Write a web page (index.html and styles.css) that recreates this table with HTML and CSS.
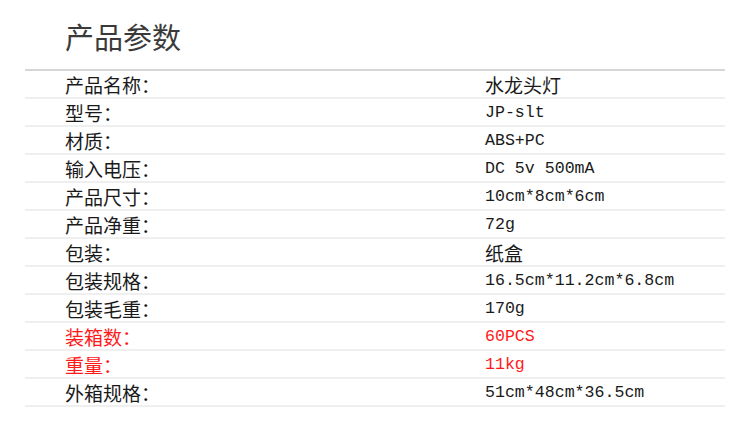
FILE: index.html
```html
<!DOCTYPE html>
<html lang="zh">
<head>
<meta charset="utf-8">
<link rel="stylesheet" href="styles.css">
</head>
<body>
<div class="page">
  <div class="title">产品参数</div>
  <div class="table">
    <div class="row"><span class="label">产品名称：</span><span class="value">水龙头灯</span></div>
    <div class="row"><span class="label">型号：</span><span class="value latin">JP-slt</span></div>
    <div class="row"><span class="label">材质：</span><span class="value latin">ABS+PC</span></div>
    <div class="row"><span class="label">输入电压：</span><span class="value latin">DC 5v 500mA</span></div>
    <div class="row"><span class="label">产品尺寸：</span><span class="value latin">10cm*8cm*6cm</span></div>
    <div class="row"><span class="label">产品净重：</span><span class="value latin">72g</span></div>
    <div class="row"><span class="label">包装：</span><span class="value">纸盒</span></div>
    <div class="row"><span class="label">包装规格：</span><span class="value latin">16.5cm*11.2cm*6.8cm</span></div>
    <div class="row"><span class="label">包装毛重：</span><span class="value latin">170g</span></div>
    <div class="row red"><span class="label">装箱数：</span><span class="value latin">60PCS</span></div>
    <div class="row red"><span class="label">重量：</span><span class="value latin">11kg</span></div>
    <div class="row"><span class="label">外箱规格：</span><span class="value latin">51cm*48cm*36.5cm</span></div>
  </div>
</div>
</body>
</html>
```
FILE: styles.css
```css
html, body {
  margin: 0;
  padding: 0;
  background: #ffffff;
}
.page {
  padding-left: 25px;
  width: 700px;
}
.title {
  height: 69px;
  box-sizing: border-box;
  padding-left: 40px;
  padding-top: 17px;
  font-family: "Noto Sans CJK SC", sans-serif;
  font-size: 29px;
  line-height: 38px;
  color: #3a3a3a;
}
.table {
  border-top: 2px solid #d6d6d6;
}
.row {
  display: flex;
  align-items: center;
  height: 26px;
  border-bottom: 2px solid #efefef;
  color: #1a1a1a;
  font-family: "Noto Sans CJK SC", sans-serif;
  font-size: 19px;
}
.row.red {
  color: #ff1a1a;
}
.label {
  width: 460px;
  padding-left: 40px;
  box-sizing: border-box;
  flex: none;
}
.value {
  flex: 1;
}
.latin {
  font-family: "Liberation Mono", monospace;
  font-size: 16.6px;
}
```
